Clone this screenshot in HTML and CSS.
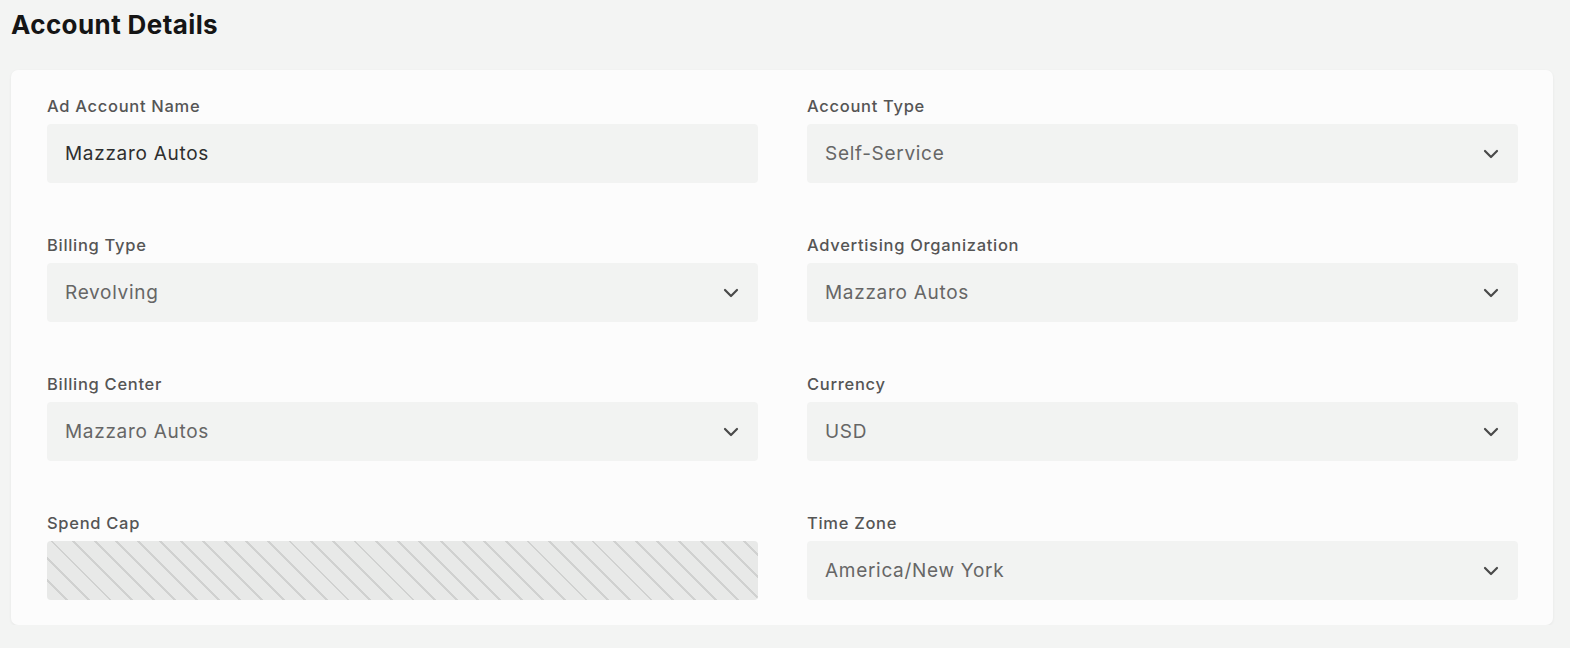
FILE: index.html
```html
<!DOCTYPE html>
<html>
<head>
<meta charset="utf-8">
<link rel="stylesheet" href="styles.css">
</head>
<body>
<div class="page">
  <h1 class="title">Account Details</h1>
  <div class="card">
    <div class="grid">
      <div class="field">
        <div class="label">Ad Account Name</div>
        <div class="input dark">Mazzaro Autos</div>
      </div>
      <div class="field">
        <div class="label">Account Type</div>
        <div class="input select"><span>Self-Service</span><svg class="chev" width="16" height="10" viewBox="0 0 16 10"><polyline points="2,2 8,8 14,2" fill="none" stroke="#4a4a4a" stroke-width="2.2" stroke-linecap="round" stroke-linejoin="round"/></svg></div>
      </div>
      <div class="field">
        <div class="label">Billing Type</div>
        <div class="input select"><span>Revolving</span><svg class="chev" width="16" height="10" viewBox="0 0 16 10"><polyline points="2,2 8,8 14,2" fill="none" stroke="#4a4a4a" stroke-width="2.2" stroke-linecap="round" stroke-linejoin="round"/></svg></div>
      </div>
      <div class="field">
        <div class="label">Advertising Organization</div>
        <div class="input select"><span>Mazzaro Autos</span><svg class="chev" width="16" height="10" viewBox="0 0 16 10"><polyline points="2,2 8,8 14,2" fill="none" stroke="#4a4a4a" stroke-width="2.2" stroke-linecap="round" stroke-linejoin="round"/></svg></div>
      </div>
      <div class="field">
        <div class="label">Billing Center</div>
        <div class="input select"><span>Mazzaro Autos</span><svg class="chev" width="16" height="10" viewBox="0 0 16 10"><polyline points="2,2 8,8 14,2" fill="none" stroke="#4a4a4a" stroke-width="2.2" stroke-linecap="round" stroke-linejoin="round"/></svg></div>
      </div>
      <div class="field">
        <div class="label">Currency</div>
        <div class="input select"><span>USD</span><svg class="chev" width="16" height="10" viewBox="0 0 16 10"><polyline points="2,2 8,8 14,2" fill="none" stroke="#4a4a4a" stroke-width="2.2" stroke-linecap="round" stroke-linejoin="round"/></svg></div>
      </div>
      <div class="field">
        <div class="label">Spend Cap</div>
        <div class="input hatched"></div>
      </div>
      <div class="field">
        <div class="label">Time Zone</div>
        <div class="input select"><span>America/New York</span><svg class="chev" width="16" height="10" viewBox="0 0 16 10"><polyline points="2,2 8,8 14,2" fill="none" stroke="#4a4a4a" stroke-width="2.2" stroke-linecap="round" stroke-linejoin="round"/></svg></div>
      </div>
    </div>
  </div>
</div>
</body>
</html>
```
FILE: styles.css
```css
html, body {
  margin: 0;
  padding: 0;
  background: #f3f4f3;
  font-family: Inter, "Noto Sans", "Liberation Sans", sans-serif;
}
.page {
  padding: 0 17px 0 11px;
}
.title {
  margin: 0;
  padding-top: 10px;
  height: 70px;
  box-sizing: border-box;
  font-size: 26px;
  line-height: 30px;
  font-weight: 700;
  color: #151515;
  letter-spacing: 0.4px;
}
.card {
  background: #fcfcfc;
  border-radius: 7px;
  box-shadow: 0 1px 3px rgba(0,0,0,0.06);
  padding: 26px 35px 25px 36px;
}
.grid {
  display: grid;
  grid-template-columns: 1fr 1fr;
  column-gap: 49px;
  row-gap: 52px;
}
.field {
  display: flex;
  flex-direction: column;
  gap: 8px;
}
.label {
  font-size: 16.5px;
  line-height: 20px;
  font-weight: 500;
  color: #555;
  letter-spacing: 0.7px;
}
.input {
  height: 59px;
  box-sizing: border-box;
  background: #f2f3f2;
  border-radius: 4px;
  padding: 0 19px 0 18px;
  display: flex;
  align-items: center;
  justify-content: space-between;
  font-size: 19px;
  letter-spacing: 0.7px;
  color: #666;
}
.input.dark {
  color: #2e2e2e;
}
.hatched {
  background-color: #e8e9e8;
  background-image: repeating-linear-gradient(45deg, #e8e9e8 0px, #e8e9e8 13.3px, #d0d1d0 13.3px, #d0d1d0 15.3px);
}
.chev {
  display: block;
}
```
